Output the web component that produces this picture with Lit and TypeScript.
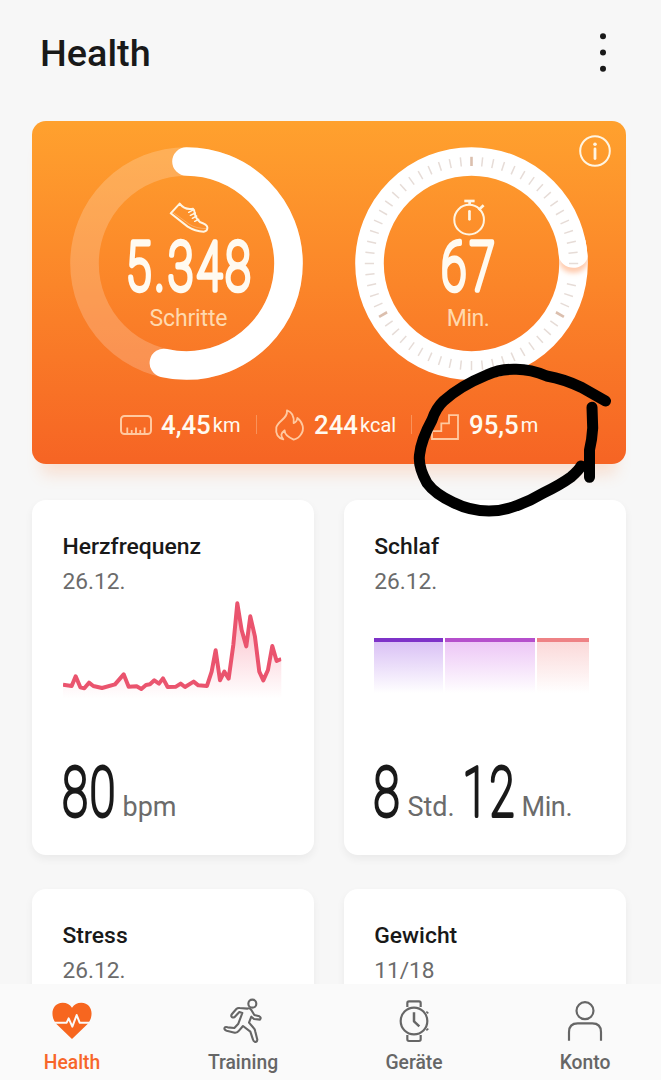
import { LitElement, html, svg, css } from "lit";
import { customElement, property } from "lit/decorators.js";

const base = css`
  * { box-sizing: border-box; }
  svg { display: block; overflow: visible; }
`;

/** Tall, narrow numerals with rounded strokes. */
const numeral = (text: string, x: number, y: number, width: number, color: string, bold: boolean) => svg`
  <text x=${x} y=${y} textLength=${width} lengthAdjust="spacingAndGlyphs" letter-spacing=${bold ? 5 : 3}
    font-family="Roboto, sans-serif" font-size=${bold ? 66 : 68} font-weight="100"
    fill=${color} stroke=${color} stroke-width=${bold ? 5.6 : 3.8} stroke-linejoin="round">${text}</text>`;

@customElement("steps-ring")
export class StepsRing extends LitElement {
  static styles = [base, css`:host { display: block; width: 233px; height: 233px; }`];
  render() {
    const r = 102;
    const c = 2 * Math.PI * r;
    return html`<svg width="233" height="233" viewBox="70.3 147 233 233" fill="none">
      <circle cx="186.8" cy="263.5" r=${r} stroke="#fff" stroke-opacity=".2" stroke-width="28.6" />
      <circle cx="186.8" cy="263.5" r=${r} stroke="#fff" stroke-width="28.6" stroke-linecap="round"
        stroke-dasharray="${c * 0.5348} ${c}" transform="rotate(-90 186.8 263.5)" />
      <g transform="translate(60 135) scale(.3333)" stroke="#fff5e2" stroke-width="6" stroke-linecap="round" stroke-linejoin="round">
        <path d="M360 206L333 235L384 275Q406 289 432 290Q444 288 443 277Q441 268 422 262Q409 253 405 235Q405 225 400 221Q375 226 360 206Z" />
        <path d="M341 233L389 268Q410 281 441 281" stroke-width="3" stroke-opacity=".3" />
        <path d="M402 224L387 232M407 234L392 241M411 243L398 250M417 253L405 259" stroke-width="4.5" />
      </g>
      ${numeral("5.348", 126.3, 290, 128, "#fffaf0", true)}
      <text x="188.8" y="325.8" text-anchor="middle" textLength="78" font-family="Roboto, sans-serif" font-size="23" fill="#ffd9ae">Schritte</text>
    </svg>`;
  }
}

@customElement("minutes-ring")
export class MinutesRing extends LitElement {
  static styles = [base, css`:host { display: block; width: 233px; height: 233px; }`];
  render() {
    const ticks = Array.from({ length: 60 }, (_, i) => i).filter((i) => i !== 16);
    return html`<svg width="233" height="233" viewBox="354.7 147 233 233" fill="none">
      <defs>
        <clipPath id="band"><path clip-rule="evenodd" d="M354.9 263.5a116.3 116.3 0 1 0 232.6 0a116.3 116.3 0 1 0 -232.6 0ZM383.5 263.5a87.7 87.7 0 1 0 175.4 0a87.7 87.7 0 1 0 -175.4 0Z" /></clipPath>
        <filter id="soft" x="-50%" y="-50%" width="200%" height="200%"><feGaussianBlur stdDeviation="2.4" /></filter>
      </defs>
      <circle cx="471.2" cy="263.5" r="102" stroke="#fff" stroke-width="28.6" />
      <g clip-path="url(#band)">
        <ellipse cx="573.2" cy="261" rx="14.5" ry="12" fill="#ff9a60" fill-opacity=".5" filter="url(#soft)" />
        <path d="M558 240H588V255C585 272 561 272 558 255Z" fill="#fff" />
      </g>
      ${ticks.map((i) => svg`<path d="M471.2 156.8V166" transform="rotate(${i * 6} 471.2 263.5)"
        stroke=${i % 20 === 0 ? "#dbbfae" : "#e6dcd7"} stroke-width=${i % 20 === 0 ? 2.6 : 1.5} />`)}
      <g transform="translate(340 115) scale(.3333)" stroke="#fff5e2" stroke-width="6">
        <circle cx="386.5" cy="314" r="44.5" />
        <path d="M387.5 289V313" stroke-width="8" stroke-linecap="round" />
        <path d="M372 258H403" stroke-width="8" />
        <path d="M388 260V269M415 285L430 271" stroke-width="8" />
      </g>
      ${numeral("67", 441, 290, 57, "#fffaf0", true)}
      <text x="468" y="325.8" text-anchor="middle" textLength="43" font-family="Roboto, sans-serif" font-size="23" fill="#ffd9ae">Min.</text>
    </svg>`;
  }
}

@customElement("activity-card")
export class ActivityCard extends LitElement {
  static styles = [base, css`
    :host { display: block; height: 343.5px; border-radius: 14px; color: #fffaf0;
      background: linear-gradient(#ffa12e, #fb8529 48%, #f66424);
      box-shadow: 0 20px 16px -10px rgba(255, 130, 60, .2); }
    .rings { display: flex; gap: 51.4px; padding: 26px 0 0 38.3px; position: relative; }
    .info { position: absolute; top: 14px; right: 15px; }
    .stats { display: flex; align-items: center; height: 40px; margin-top: 25px; padding-left: 88px; }
    .stat { display: flex; align-items: center; }
    .icon { flex: none; }
    .value { font-size: 25.8px; font-weight: 500; line-height: 40px; }
    .unit { font-size: 20px; line-height: 40px; padding-left: 2px; }
    .rule { width: 1px; height: 19px; background: rgba(255, 220, 190, .35); }
    .distance { width: 136px; }
    .energy { width: 154px; padding-left: 18px; }
    .climb { padding-left: 15px; }
    .distance .value { padding-left: 9px; }
    .energy .value { padding-left: 10px; }
    .climb .value { padding-left: 10px; }
  `];
  render() {
    return html`
      <div class="rings">
        <steps-ring></steps-ring>
        <minutes-ring></minutes-ring>
        <svg class="info" width="32" height="32" viewBox="0 0 32 32" fill="none" stroke="#fff5e2">
          <circle cx="16" cy="16" r="14.8" stroke-width="2" />
          <path d="M16 14V23.5" stroke-width="2.8" stroke-linecap="round" /><circle cx="16" cy="9.3" r="1.8" fill="#fff5e2" stroke="none" />
        </svg>
      </div>
      <div class="stats">
        <div class="stat distance">
          <svg class="icon" width="32" height="20" viewBox="0 0 32 20" fill="none" stroke="#ffc9a0" stroke-width="2">
            <rect x="1" y="1" width="30" height="18" rx="3.5" /><path d="M7.3 18V12.5M11.7 18V15M16 18V12.5M20.3 18V15M24.6 18V12.5" stroke-width="1.8" />
          </svg>
          <span class="value">4,45</span><span class="unit">km</span>
        </div>
        <div class="rule"></div>
        <div class="stat energy">
          <svg class="icon" width="29" height="32" viewBox="524 56 87 96" fill="none" stroke="#ffc9a0" stroke-width="5.5" stroke-linejoin="round">
            <path d="M549 147C530 142 526 126 528 111C533 91 563 85 560 60C575 65 582 78 580 98Q590 95 591 83C608 96 613 117 602 132Q596 143 580 148C562 139 552 132 553 120C541 129 540 137 549 147Z" />
          </svg>
          <span class="value">244</span><span class="unit">kcal</span>
        </div>
        <div class="rule"></div>
        <div class="stat climb">
          <svg class="icon" width="32" height="26" viewBox="0 0 32 26" fill="none" stroke="#ffc9a0" stroke-width="1.8">
            <path d="M5 27V19.2H14.3V11.3H22V3.2H31V27Z" />
          </svg>
          <span class="value">95,5</span><span class="unit">m</span>
        </div>
      </div>`;
  }
}

@customElement("metric-card")
export class MetricCard extends LitElement {
  @property() heading = "";
  @property() date = "";
  static styles = [base, css`
    :host { display: block; height: 355px; border-radius: 14px; background: #fff; padding: 32px 30.5px 0;
      box-shadow: 0 4px 8px rgba(0, 0, 0, .055); }
    .heading { font-size: 22.9px; line-height: 30px; font-weight: 500; color: #191919; }
    .date { font-size: 22.7px; line-height: 30px; margin-top: 5px; color: #6b6b6b; }
  `];
  render() {
    return html`<div class="heading">${this.heading}</div><div class="date">${this.date}</div><slot></slot>`;
  }
}

const pulse: [number, number][] = [
  [129, 584], [155, 588], [167, 559], [181, 592], [193, 595], [207, 578], [220, 588], [246, 594], [285, 583], [311, 553],
  [326, 590], [350, 589], [364, 597], [378, 585], [390, 583], [403, 571], [417, 581], [429, 565], [443, 591], [468, 590],
  [482, 581], [495, 591], [521, 575], [535, 586], [561, 588], [575, 545], [587, 481], [600, 571], [613, 545], [626, 566],
  [640, 465], [652, 340], [665, 420], [679, 469], [691, 379], [705, 440], [718, 545], [730, 571], [744, 540], [757, 468],
  [770, 513], [784, 507],
];

@customElement("app-root")
export class AppRoot extends LitElement {
  static styles = [base, css`
    :host { display: block; position: relative; width: 661px; height: 1080px; overflow: hidden; background: #f7f7f7;
      font-family: Roboto, sans-serif; }
    .page { display: flex; flex-direction: column; height: 1080px; }
    .header { flex: none; height: 120.7px; display: flex; justify-content: space-between; padding: 29.5px 54.5px 0 40px; }
    .title { margin: 0; font-size: 37.8px; line-height: 46px; font-weight: 500; color: #191919; }
    .content { flex: 1; min-height: 0; overflow: hidden; padding: 0 35.5px 0 32px; margin-top: -20px; padding-top: 20px; }
    .grid { display: grid; grid-template-columns: 1fr 1fr; column-gap: 30px; row-gap: 34.5px; margin-top: 35.8px; }
    .chart { margin-top: 3px; height: 100px; }
    .reading { display: flex; margin-top: 55px; }
    .sleep { display: flex; gap: 2px; height: 55px; margin: 41.5px 0 0; }
    .phase { border-top: 4px solid; }
    .deep { width: 68.5px; border-color: #7e32c8; background: linear-gradient(#dac1f5, #fff); }
    .light { width: 90px; border-color: #b54fcc; background: linear-gradient(#edc7f6, #fff); }
    .rem { width: 52.3px; border-color: #ee8285; background: linear-gradient(#fbd9d9, #fff); }
    .sleep + .reading { margin-top: 61.5px; }
    .nav { flex: none; height: 96.5px; background: #fafafa; display: grid; grid-template-columns: repeat(4, 171px); padding-top: 15.5px;
      margin-left: -13.5px; width: 684px; }
    .tab { display: flex; flex-direction: column; align-items: center; color: #666; font-size: 19.3px; font-weight: 500; line-height: 28px; }
    .tab svg { margin-bottom: 6px; }
    .active { color: #f7662a; }
    .mark { position: absolute; left: 0; top: 0; pointer-events: none; }
  `];

  render() {
    const line = pulse.map((p) => p.join(" ")).join("L");
    return html`
      <div class="page">
        <header class="header">
          <h1 class="title">Health</h1>
          <svg width="8" height="44" viewBox="0 0 8 44" fill="#191919"><circle cx="4" cy="6.3" r="3" /><circle cx="4" cy="22.5" r="3" /><circle cx="4" cy="38.8" r="3" /></svg>
        </header>
        <main class="content">
          <activity-card></activity-card>
          <div class="grid">
            <metric-card heading="Herzfrequenz" date="26.12.">
              <svg class="chart" width="218.3" height="100" viewBox="129 330 655 300" fill="none">
                <defs>
                  <linearGradient id="fade" gradientUnits="userSpaceOnUse" x1="0" y1="340" x2="0" y2="625">
                    <stop stop-color="#f4536f" stop-opacity=".42" /><stop offset="1" stop-color="#f4536f" stop-opacity="0" />
                  </linearGradient>
                  <clipPath id="plot"><path d="M129 320H784V640H129Z" /></clipPath>
                </defs>
                <path d="M129 625L${line}L784 625Z" fill="url(#fade)" />
                <path d="M${line}" stroke="#ea546e" stroke-width="12" stroke-linejoin="round" clip-path="url(#plot)" />
              </svg>
              <div class="reading">
                <svg width="200" height="70" viewBox="62.5 755 200 70">
                  ${numeral("80", 61.8, 815.8, 55, "#191919", false)}
                  <text x="122" y="816" textLength="54" font-family="Roboto, sans-serif" font-size="27" fill="#6b6b6b">bpm</text>
                </svg>
              </div>
            </metric-card>
            <metric-card heading="Schlaf" date="26.12.">
              <div class="sleep"><div class="phase deep"></div><div class="phase light"></div><div class="phase rem"></div></div>
              <div class="reading">
                <svg width="220" height="70" viewBox="374.5 755 220 70">
                  ${numeral("8", 374, 815.8, 28, "#191919", false)}
                  <text x="408" y="816" textLength="47" font-family="Roboto, sans-serif" font-size="27" fill="#6b6b6b">Std.</text>
                  ${numeral("12", 463, 815.8, 54, "#191919", false)}
                  <text x="522" y="816" textLength="51" font-family="Roboto, sans-serif" font-size="27" fill="#6b6b6b">Min.</text>
                </svg>
              </div>
            </metric-card>
            <metric-card heading="Stress" date="26.12."></metric-card>
            <metric-card heading="Gewicht" date="11/18"></metric-card>
          </div>
        </main>
        <nav class="nav">
          <div class="tab active">
            <svg width="44" height="44" viewBox="150 58 132 132" fill="none">
              <path d="M216 178L170 134C148 110 155 69 188 69Q206 69 216 84Q226 69 244 69C277 69 284 110 262 134Z" fill="#f7661f" />
              <path d="M154 129H200L206 116L217 141L230 106L239 129H280" stroke="#fafafa" stroke-width="6" stroke-linejoin="round" />
            </svg>
            <span>Health</span>
          </div>
          <div class="tab">
            <svg width="44" height="44" viewBox="663 58 132 132" fill="none" stroke="#666" stroke-width="6.3" stroke-linejoin="round" stroke-linecap="round">
              <circle cx="757" cy="72" r="12" />
              <path d="M742 87Q748 83 754 91L763 106L778 110Q785 114 780 120L762 118L754 111L747 129L761 145Q765 149 766 156L772 180Q771 189 764 186Q760 185 759 180L751 156L729 139L717 153Q712 160 704 159L680 153Q671 150 674 144Q676 141 683 143L703 145L715 132L727 100L718 97L704 112Q697 116 694 110Q693 107 696 103L709 88Q713 84 719 85Z" />
            </svg>
            <span>Training</span>
          </div>
          <div class="tab">
            <svg width="44" height="44" viewBox="187 58 132 132" fill="none" stroke="#666" stroke-width="6.5" stroke-linejoin="round">
              <circle cx="253" cy="124" r="40" />
              <path d="M233 82V70Q233 65 238 65H268Q273 65 273 70V82M233 166V179Q233 184 238 184H268Q273 184 273 179V166" />
              <path d="M253 98V125L269 140" stroke-width="7.5" />
              <path d="M290 96L296 101M290 152L296 147" stroke-width="5" />
            </svg>
            <span>Geräte</span>
          </div>
          <div class="tab">
            <svg width="44" height="44" viewBox="701 58 132 132" fill="none" stroke="#666" stroke-width="6.5">
              <circle cx="767" cy="93" r="25.5" /><path d="M719 183V157Q719 131 745 131H789Q815 131 815 157V183" />
            </svg>
            <span>Konto</span>
          </div>
        </nav>
      </div>
      <svg class="mark" width="661" height="1080" viewBox="0 0 661 1080" fill="none" stroke="#000" stroke-width="11" stroke-linecap="round" stroke-linejoin="round">
        <path d="M605.5 401L581.7 387.5Q564 379 546.7 376Q530 369 515 369.3Q500 369 486.7 375Q460 386 443.5 401Q436 408 432 420Q421 440 419.5 455Q418 467 427 483Q435 494 453.3 502.5Q470 511 489 511Q503 511 516.7 505.7Q530 501 543.3 493Q560 485 571 477Q579 470 581 466" />
        <path d="M592 407.3L592.7 428Q592 440 589.5 450V477.3" />
      </svg>`;
  }
}
